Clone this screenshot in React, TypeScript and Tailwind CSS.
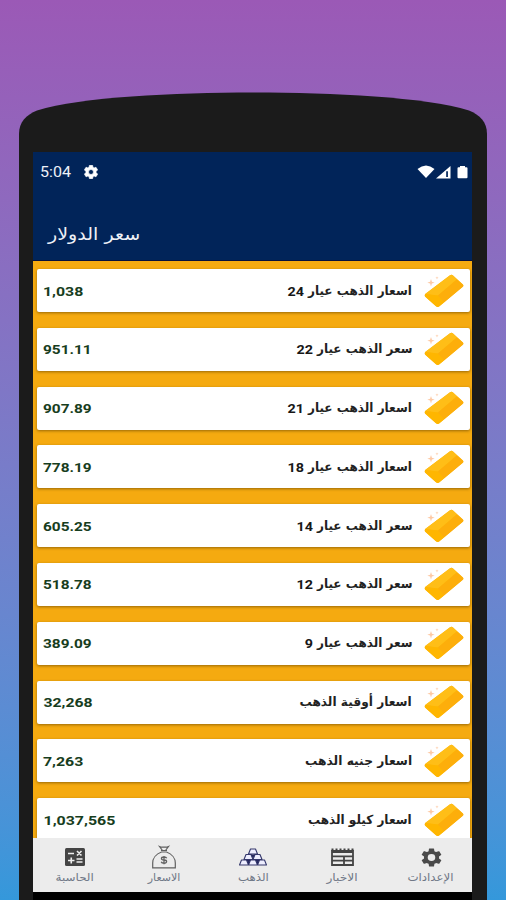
import type { ReactNode } from 'react';

interface Price {
  label: string;
  karat?: string;
  value: string;
  labelWidth: number;
  valueWidth: number;
}

const prices: Price[] = [
  { label: 'اسعار الذهب عيار', karat: '24', value: '1,038', labelWidth: 104, valueWidth: 40 },
  { label: 'سعر الذهب عيار', karat: '22', value: '951.11', labelWidth: 95, valueWidth: 49 },
  { label: 'اسعار الذهب عيار', karat: '21', value: '907.89', labelWidth: 104, valueWidth: 49 },
  { label: 'اسعار الذهب عيار', karat: '18', value: '778.19', labelWidth: 104, valueWidth: 49 },
  { label: 'سعر الذهب عيار', karat: '14', value: '605.25', labelWidth: 95, valueWidth: 49 },
  { label: 'سعر الذهب عيار', karat: '12', value: '518.78', labelWidth: 95, valueWidth: 49 },
  { label: 'سعر الذهب عيار', karat: '9', value: '389.09', labelWidth: 95, valueWidth: 49 },
  { label: 'اسعار أوقية الذهب', value: '32,268', labelWidth: 112, valueWidth: 49 },
  { label: 'اسعار جنيه الذهب', value: '7,263', labelWidth: 107, valueWidth: 40 },
  { label: 'اسعار كيلو الذهب', value: '1,037,565', labelWidth: 104, valueWidth: 72 },
];

const COG =
  'M19.14 12.94c.04-.3.06-.61.06-.94s-.02-.64-.07-.94l2.03-1.58a.49.49 0 0 0 .12-.61l-1.92-3.32a.49.49 0 0 0-.59-.22l-2.39.96a7 7 0 0 0-1.62-.94l-.36-2.54a.48.48 0 0 0-.48-.41h-3.84a.48.48 0 0 0-.47.41l-.36 2.54c-.59.24-1.13.57-1.62.94l-2.39-.96a.48.48 0 0 0-.59.22L2.74 8.87a.48.48 0 0 0 .12.61l2.03 1.58a7.6 7.6 0 0 0 0 1.88l-2.03 1.58a.49.49 0 0 0-.12.61l1.92 3.32c.12.22.37.29.59.22l2.39-.96c.5.38 1.03.7 1.62.94l.36 2.54c.05.24.24.41.48.41h3.84c.24 0 .44-.17.47-.41l.36-2.54a7 7 0 0 0 1.62-.94l2.39.96c.22.08.47 0 .59-.22l1.92-3.32a.48.48 0 0 0-.12-.61zM12 15.6a3.6 3.6 0 1 1 0-7.2 3.6 3.6 0 0 1 0 7.2z';

// Text stretched to a fixed width, whatever the font's own metrics are
function FitText({ text, width, className }: { text: string; width: number; className: string }) {
  const fit = (el: HTMLSpanElement | null) => {
    if (el) {
      const natural = el.offsetWidth;
      el.style.transform = `scaleX(${width / natural})`;
      // take up the stretched width in the row as well
      el.style.marginInline = `${(width - natural) / 2}px`;
    }
  };
  return (
    <span ref={fit} className={`inline-block shrink-0 origin-center whitespace-nowrap ${className}`}>
      {text}
    </span>
  );
}

function GoldBar() {
  return (
    <svg className="h-9 w-[42px] shrink-0" viewBox="0 0 42 36">
      <path d="M27 2.2Q28.6 1 30 2.5L40 11.4Q41.1 12.5 39.8 13.8L16.4 33.2Q14.7 34.8 13 33.2L2 23.6Q.9 22.4 2.2 21Z" fill="#ffb809" />
      <path d="M27 2.2Q28.6 1 30 2.5L34 6.2L15 22.5L2.2 21Z" fill="#ffbe17" />
      <path d="M15 22.5L21 29.4L16.4 33.2Q14.7 34.8 13 33.2L2 23.6L2.2 21Z" fill="#ffb600" />
      <path d="M15 22.5L34 6.2L40 11.7Q40.8 13 39.8 13.8L21 29.4Z" fill="#fdae0b" />
      <path d="M8 6l.9 2.8 2.8.9-2.8.9L8 13.4l-.9-2.8-2.8-.9 2.8-.9zM14 3.2l.4 1.2 1.2.4-1.2.4-.4 1.2-.4-1.2-1.2-.4 1.2-.4z" fill="#fdc9a4" />
    </svg>
  );
}

function PriceCard({ price }: { price: Price }) {
  return (
    <div className="flex h-[43px] shrink-0 items-center justify-between rounded-[2px] bg-white pr-[5px] pl-[6px] shadow-[0_1px_3px_rgba(90,60,0,0.6)]">
      <FitText
        text={price.value}
        width={price.valueWidth}
        className="font-[Roboto,sans-serif] text-[13.5px] leading-5 font-bold text-[#173d20]"
      />
      <div className="flex items-center gap-[11px]">
        <div dir="rtl" className="flex items-center gap-1">
          <FitText
            text={price.label}
            width={price.labelWidth}
            className="font-['DejaVu_Sans',sans-serif] text-[12.5px] leading-5 font-bold text-[#222]"
          />
          {price.karat && (
            <FitText
              text={price.karat}
              width={price.karat.length * 8.5}
              className="font-[Roboto,sans-serif] text-[13.5px] leading-5 font-bold text-[#171717]"
            />
          )}
        </div>
        <GoldBar />
      </div>
    </div>
  );
}

function NavItem({ label, width, children }: { label: string; width: number; children: ReactNode }) {
  return (
    <div className="flex w-[89px] shrink-0 flex-col items-center pt-[6px]">
      <div className="flex h-[26px] items-center justify-center">{children}</div>
      <FitText
        text={label}
        width={width}
        className="font-['DejaVu_Sans',sans-serif] text-[11px] leading-[15px] text-[#707887]"
      />
    </div>
  );
}

function StatusBar() {
  return (
    <div className="flex h-10 items-center justify-between pr-1 pl-[7px]">
      <div className="flex items-center gap-[13px]">
        <FitText
          text="5:04"
          width={31}
          className="font-[Roboto,sans-serif] text-[15px] leading-5 text-[#eef1f8]"
        />
        <svg className="h-[14px] w-[14px]" viewBox="2 2 20 20" fill="#fff" stroke="#fff" strokeWidth="1">
          <path d={COG} />
        </svg>
      </div>
      <div className="flex items-center">
        <svg className="h-[14px] w-[51px]" viewBox="0 0 51 14" fill="#fff">
          <path d="M.5 4Q9-3 17.5 4L9 13Z" />
          <path d="M19 13.5L33.5 1V13.5Z" />
          <path d="M29.2 6.2h1.7v5.9h-1.7z" fill="#012459" />
          <path d="M43 1h5v1.2h1.5q1 0 1 1V12.3q0 1-1 1h-8q-1 0-1-1V3.2q0-1 1-1H43z" />
        </svg>
      </div>
    </div>
  );
}

export default function App() {
  return (
    <div className="flex h-[900px] w-[506px] flex-col overflow-hidden bg-linear-to-b from-[#9b59b6] to-[#3498db] pt-[92px] pr-[19px] pl-[19px]">
      {/* Phone top edge */}
      <svg className="h-[60px] w-[468px] shrink-0" viewBox="0 0 468 60">
        <path d="M0 60V42C0 30 7 23 18 18.500C62 5 155 .5 234 .5S406 5 450 18.500C461 23 468 30 468 42V60Z" fill="#1b1b1b" />
      </svg>

      <div className="flex grow flex-col bg-[#1b1b1b] pr-[15px] pl-[14px]">
        <div className="flex h-[740px] shrink-0 flex-col overflow-hidden">
          <header className="h-[109px] shrink-0 border-b border-[#05103c] bg-[#012459]">
            <StatusBar />
            <div className="flex h-[84px] items-center pl-[15px]">
              <FitText
                text="سعر الدولار"
                width={92}
                className="font-['DejaVu_Sans',sans-serif] text-[17px] leading-6 text-[#eef1f7]"
              />
            </div>
          </header>

          <main className="flex h-[577px] shrink-0 flex-col gap-[15.8px] overflow-hidden bg-[#f5aa10] pt-2 pr-[2px] pl-1">
            {prices.map((price) => (
              <PriceCard key={price.value} price={price} />
            ))}
          </main>

          <nav className="flex grow justify-center bg-[#ececec] pl-px">
            <NavItem label="الحاسبة" width={38}>
              <svg className="h-[18px] w-5" viewBox="0 0 20 18">
                <rect width="20" height="18" rx="1.5" fill="#444" />
                <path d="M3 5.5h6M12 3l4.500 4.500m0-4.500L12 7.500M3 12.500h6.500M6.250 9.500v6M11.500 11h6M11.500 14h6" stroke="#eee" strokeWidth="1.6" />
              </svg>
            </NavItem>
            <NavItem label="الاسعار" width={33}>
              <svg className="h-6 w-6" viewBox="0 0 24 24" fill="none" stroke="#606060" strokeWidth="1.2">
                <path d="M7.5 1.5l2 .7h5l2-.7-3 4h-3zM9 5.5h6M9.5 7h5C20 9 23.3 13.5 23.3 18v4.800H.7V18C.7 13.5 4 9 9.5 7z" />
                <path d="M14.7 13.3c-.4-1-1.4-1.3-2.7-1.3-3.4 0-3.4 3 0 3s3.5 3.2 0 3.2c-1.5 0-2.5-.5-2.8-1.4M12 11v8.2" strokeWidth="1.3" />
              </svg>
            </NavItem>
            <NavItem label="الذهب" width={31}>
              <svg className="h-[18px] w-7" viewBox="0 0 28 18" fill="#eef" stroke="#34376b" strokeWidth="1.1" strokeLinejoin="round">
                <path d="M11.5 1h5l2 5h-9zM7 6.5h5l2 5H5zM16 6.5h5l2 5h-9zM2.500 12h5l2 5h-9zM11.500 12h5l2 5h-9zM20.500 12h5l2 5h-9z" />
                <path d="M12 6.5h4l-2 4zM7.5 12h4l-2 4zM16.5 12h4l-2 4z" fill="#25285f" stroke="none" />
              </svg>
            </NavItem>
            <NavItem label="الاخبار" width={31}>
              <svg className="h-[18px] w-[23px]" viewBox="0 0 23 18" fill="none" stroke="#444" strokeWidth="1.8">
                <path d="M1 2v15h21V2M1 8.3h21M1 12.7h12M13 8.300V17M13 12.700h9" />
                <path d="M1 3.5h21" strokeWidth="3" />
                <path d="M1.5 3V.5M5.5 3V.5M9.5 3V.5M13.5 3V.5M17.5 3V.5M21.5 3V.5" strokeWidth="2" />
              </svg>
            </NavItem>
            <NavItem label="الإعدادات" width={46}>
              <svg className="h-[19px] w-[21px]" viewBox="2 2 20 20" preserveAspectRatio="none" fill="#4a4a4a">
                <path d={COG} />
              </svg>
            </NavItem>
          </nav>
        </div>
        <div className="h-2 shrink-0 bg-black" />
      </div>
    </div>
  );
}
